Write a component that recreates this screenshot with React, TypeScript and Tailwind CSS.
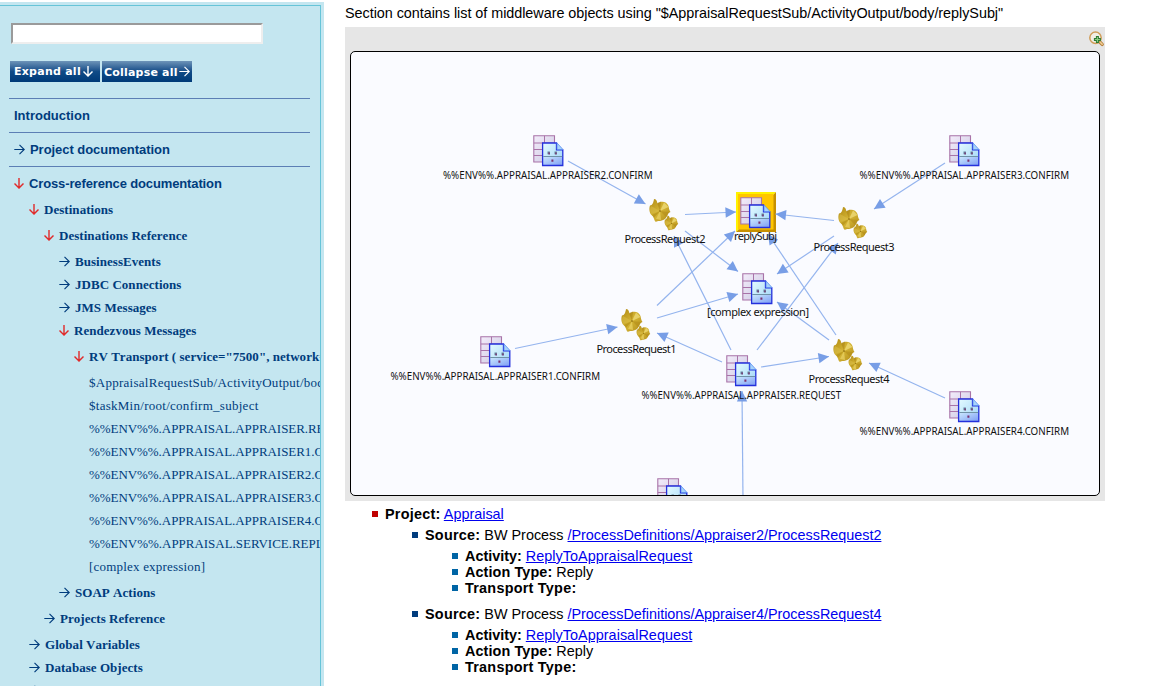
import React from "react";

const RightArrow = ({ className = "" }: { className?: string }) => (
  <svg className={`shrink-0 ${className}`} width="11" height="11" viewBox="0 0 11 11" fill="none" stroke="currentColor" strokeWidth="1.15">
    <path d="M0.3 5.5H10M5.5 0.8L10.2 5.5L5.5 10.2" />
  </svg>
);

const DownArrow = ({ className = "" }: { className?: string }) => (
  <svg className={`shrink-0 ${className}`} width="10" height="11" viewBox="0 0 10 11" fill="none" stroke="currentColor" strokeWidth="1.4">
    <path d="M5 0V10M0.5 5.4L5 10L9.5 5.4" />
  </svg>
);

type Row = { label: string; pad: string; arrow?: "right" | "down"; gap?: boolean };

const rows: Row[] = [
  { label: "Destinations", pad: "pl-[29px]", arrow: "down" },
  { label: "Destinations Reference", pad: "pl-[44px]", arrow: "down", gap: true },
  { label: "BusinessEvents", pad: "pl-[59px]", arrow: "right", gap: true },
  { label: "JDBC Connections", pad: "pl-[59px]", arrow: "right" },
  { label: "JMS Messages", pad: "pl-[59px]", arrow: "right" },
  { label: "Rendezvous Messages", pad: "pl-[59px]", arrow: "down" },
  { label: 'RV Transport ( service="7500", network="" )', pad: "pl-[74px]", arrow: "down", gap: true },
  { label: "$AppraisalRequestSub/ActivityOutput/body/replySubj", pad: "pl-[89px] tracking-[0.27px]", gap: true },
  { label: "$taskMin/root/confirm_subject", pad: "pl-[89px] tracking-[0.27px]" },
  { label: "%%ENV%%.APPRAISAL.APPRAISER.REQUEST", pad: "pl-[89px] tracking-[-0.06px]" },
  { label: "%%ENV%%.APPRAISAL.APPRAISER1.CONFIRM", pad: "pl-[89px] tracking-[-0.06px]" },
  { label: "%%ENV%%.APPRAISAL.APPRAISER2.CONFIRM", pad: "pl-[89px] tracking-[-0.06px]" },
  { label: "%%ENV%%.APPRAISAL.APPRAISER3.CONFIRM", pad: "pl-[89px] tracking-[-0.06px]" },
  { label: "%%ENV%%.APPRAISAL.APPRAISER4.CONFIRM", pad: "pl-[89px] tracking-[-0.06px]" },
  { label: "%%ENV%%.APPRAISAL.SERVICE.REPLY", pad: "pl-[89px] tracking-[-0.03px]" },
  { label: "[complex expression]", pad: "pl-[89px] tracking-[0.2px]" },
  { label: "SOAP Actions", pad: "pl-[59px]", arrow: "right", gap: true },
  { label: "Projects Reference", pad: "pl-[44px]", arrow: "right", gap: true },
  { label: "Global Variables", pad: "pl-[29px]", arrow: "right", gap: true },
  { label: "Database Objects", pad: "pl-[29px]", arrow: "right" },
  { label: "Files", pad: "pl-[29px]", arrow: "right" },
];

function TreeRow({ row }: { row: Row }) {
  return (
    <li className={`flex h-[23px] items-center whitespace-nowrap ${row.pad} ${row.gap ? "mt-[3px]" : ""} ${row.arrow ? "font-bold tracking-[0.04px] [font-kerning:none]" : ""}`}>
      {row.arrow === "right" && <RightArrow className="mr-[5px]" />}
      {row.arrow === "down" && <DownArrow className="mr-[5px] text-[#e02a2a]" />}
      <span>{row.label}</span>
    </li>
  );
}

function Sidebar() {
  return (
    <aside className="mt-[2px] h-[684px] w-[324px] shrink-0 overflow-hidden bg-[#c4e6f0] pt-[3px] text-[#003c7d]">
      <div className="h-[690px] w-[321px] overflow-hidden border-t border-r border-[#66c4d8] pt-[17px]">
        <input className="ml-[11px] block h-[21px] w-[252px] border-2 border-t-[#9a9a9a] border-r-[#eeeeee] border-b-[#eeeeee] border-l-[#9a9a9a] bg-white" aria-label="Search" />
        <div className="mt-[17px] ml-[10px] flex gap-[2px] font-['DejaVu_Sans',sans-serif] text-[11px] leading-[20px] font-bold text-white">
          <button className="flex h-[21px] w-[90px] items-center bg-linear-to-b from-[#6d94b8] via-[#104b87] to-[#003a78] pl-[4px] text-left whitespace-nowrap">
            <span className="w-[69px] shrink-0 tracking-[0.25px]">Expand all</span>
            <DownArrow />
          </button>
          <button className="flex h-[21px] w-[90px] items-center bg-linear-to-b from-[#6d94b8] via-[#104b87] to-[#003a78] pl-[2px] text-left whitespace-nowrap">
            <span className="w-[75px] shrink-0 pt-[2px] tracking-[0.2px]">Collapse all</span>
            <RightArrow />
          </button>
        </div>
        <nav className="mt-[16px] ml-[9px] w-[301px] font-['Liberation_Sans',sans-serif] text-[13px] font-bold">
          <div className="flex h-[34px] items-center border-t border-[#5c7fb5] pl-[5px]">Introduction</div>
          <div className="flex h-[34px] items-center border-t border-[#5c7fb5] pl-[5px] tracking-[-0.05px]">
            <RightArrow className="mr-[5px]" />
            Project documentation
          </div>
          <div className="flex h-[32px] items-center border-t border-[#5c7fb5] pt-[2px] pl-[5px] tracking-[-0.13px]">
            <DownArrow className="mr-[5px] text-[#e02a2a]" />
            Cross-reference documentation
          </div>
        </nav>
        <ul className="font-['Liberation_Serif',serif] text-[13px] leading-[15px]">
          {rows.map((row) => (
            <TreeRow key={row.label} row={row} />
          ))}
        </ul>
      </div>
    </aside>
  );
}

const edges: [number, number, number, number][] = [
  [568, 161, 645.5, 204],
  [685, 214.5, 736, 212],
  [834, 220.5, 775.5, 214],
  [685, 231, 738, 271.5],
  [834, 236, 777, 274],
  [657, 305.5, 735, 231],
  [657, 318, 738, 294],
  [731, 350, 674, 236],
  [757, 350, 838, 243],
  [836, 335, 768, 234],
  [829, 340, 777, 302],
  [945, 163, 874, 209],
  [515, 348.5, 617.5, 327],
  [722, 362, 657, 333],
  [761, 367, 829, 356.5],
  [945, 398, 869, 363],
  [743, 500, 742, 391],
];

const objects: [number, number][] = [
  [533, 135], [949, 135], [480, 336], [726, 355], [742, 273], [657, 478], [949, 391], [740, 197],
];

const processes: [number, number][] = [[649, 199], [838, 207], [621, 309], [833, 339]];

const envLabels: [number, number, string, number][] = [
  [443, 178.5, "%%ENV%%.APPRAISAL.APPRAISER2.CONFIRM", 209.5],
  [859.5, 178.5, "%%ENV%%.APPRAISAL.APPRAISER3.CONFIRM", 209.5],
  [390.5, 379.7, "%%ENV%%.APPRAISAL.APPRAISER1.CONFIRM", 209.5],
  [641.5, 398.5, "%%ENV%%.APPRAISAL.APPRAISER.REQUEST", 199.5],
  [859.5, 434.5, "%%ENV%%.APPRAISAL.APPRAISER4.CONFIRM", 209.5],
];

const labels: [number, number, string, number][] = [
  [624.5, 243, "ProcessRequest2", 81],
  [813.5, 251, "ProcessRequest3", 81],
  [596.5, 352.5, "ProcessRequest1", 80],
  [808.5, 382.5, "ProcessRequest4", 81],
  [734, 240, "replySubj", 43],
  [707, 316, "[complex expression]", 102],
];

function ObjectIcon({ x, y }: { x: number; y: number }) {
  return (
    <g transform={`translate(${x} ${y})`}>
      <path d="M0.8 0.8H21.5V27H0.8Z" fill="url(#grid)" stroke="#a873a8" strokeWidth="1.1" />
      <path d="M11.5 0.8V27M0.8 8H21.5M0.8 14.5H21.5M0.8 20.5H21.5" stroke="#a873a8" strokeWidth="1" fill="none" />
      <path d="M9.6 8H24L29.8 14.5V30.5H9.6Z" fill="url(#doc)" />
      <path d="M9.6 21.5H29.8V30.5H9.6Z" fill="url(#docBase)" />
      <path d="M9.6 8H23.5V14.8H29.8V30.5H9.6Z" fill="none" stroke="#2430dc" strokeWidth="1.3" />
      <path d="M24 8L30 14.5H24Z" fill="#a8d4fa" stroke="#5a8cf0" strokeWidth="0.8" />
      <path d="M10.2 21.5H29.2" stroke="#6f93a8" strokeWidth="1" />
      <path d="M14.5 16.5h2.4v2.8h-2.4zM21.5 16.5h2.4v2.8h-2.4z" fill="#62829c" />
      <path d="M15.5 17.5h1.3v2h-1.3zM22.3 17.5h1.3v2h-1.3zM18.4 24.5h2v2.3h-2z" fill="#7a3070" />
    </g>
  );
}

const gearPath = "M5 0C8 0.3 8 3 8.5 4.5C12 1.5 18 2.5 19.5 7C20 9 20 11 21.5 13C18.5 14 19 17 16 20C13 22.5 8 21.5 7 23C4.5 21 5.5 18.5 3 16.5C0 14 0 9 1 6.5C3.5 6.5 4.5 3 5 0Z";

function Gear() {
  return (
    <>
      <path d={gearPath} fill="url(#gold)" />
      <path d="M11 12L2 7Q0 11 2 15Z" fill="#dcc04c" opacity="0.5" />
      <path d="M11 12L15 3.5L19.5 8Z" fill="#f5e487" opacity="0.65" />
      <path d="M11 12L8 4L12 2.5Z" fill="#a17b10" opacity="0.45" />
      <path d="M11 12L20 13L17 18Z" fill="#ac8414" opacity="0.45" />
      <path d="M11 12L12 21L7 20Z" fill="#f0db72" opacity="0.6" />
      <path d="M11 12L5 19L3 16Z" fill="#9d7808" opacity="0.4" />
      <circle cx="11" cy="12" r="0.8" fill="#806008" />
    </>
  );
}

function ProcessIcon({ x, y }: { x: number; y: number }) {
  return (
    <g transform={`translate(${x} ${y})`}>
      <Gear />
      <g transform="translate(15.3 16.5) scale(0.65)">
        <Gear />
      </g>
    </g>
  );
}

function Edge({ e }: { e: [number, number, number, number] }) {
  const [x1, y1, x2, y2] = e;
  const angle = (Math.atan2(y2 - y1, x2 - x1) * 180) / Math.PI;
  return (
    <g>
      <line x1={x1} y1={y1} x2={x2} y2={y2} stroke="#94b4ee" strokeWidth="1.2" />
      <path d="M0 0L-10.5 -5.2V5.2Z" fill="#789ee6" transform={`translate(${x2} ${y2}) rotate(${angle})`} />
    </g>
  );
}

function Diagram() {
  return (
    <svg className="block" width="748" height="443" viewBox="351 52 748 443">
      <defs>
        <linearGradient id="grid" x1="0" y1="0" x2="1" y2="1">
          <stop offset="0" stopColor="#f3ecfa" />
          <stop offset="1" stopColor="#ccc8e2" />
        </linearGradient>
        <linearGradient id="doc" x1="0" y1="0" x2="1" y2="1">
          <stop offset="0" stopColor="#e4fbff" />
          <stop offset="1" stopColor="#9cd2f6" />
        </linearGradient>
        <linearGradient id="docBase" x1="0" y1="0" x2="1" y2="1">
          <stop offset="0" stopColor="#cdeafe" />
          <stop offset="1" stopColor="#7c9cf4" />
        </linearGradient>
        <linearGradient id="gold" x1="0" y1="0" x2="1" y2="1">
          <stop offset="0" stopColor="#b08a14" />
          <stop offset="0.5" stopColor="#d4b434" />
          <stop offset="1" stopColor="#b08a18" />
        </linearGradient>
      </defs>
      <path d="M736 192H776L773 195H739V229L736 232Z" fill="#fff200" />
      <path d="M776 192V232H736L739 229H773V195Z" fill="#c79000" />
      <rect x="738" y="194" width="35.5" height="35.5" fill="#ffc600" />
      {edges.map((e, i) => (
        <Edge key={i} e={e} />
      ))}
      {objects.map(([x, y]) => (
        <ObjectIcon key={`${x}-${y}`} x={x} y={y} />
      ))}
      {processes.map(([x, y]) => (
        <ProcessIcon key={`${x}-${y}`} x={x} y={y} />
      ))}
      <g className="font-['Noto_Sans',sans-serif] text-[11px]" fill="#111">
        {envLabels.map(([x, y, t, w]) => (
          <text key={t} x={x} y={y} textLength={w} lengthAdjust="spacingAndGlyphs" className="text-[11.3px]">
            {t}
          </text>
        ))}
        {labels.map(([x, y, t, w]) => (
          <text key={t} x={x} y={y} textLength={w}>
            {t}
          </text>
        ))}
      </g>
    </svg>
  );
}

function ZoomIcon() {
  return (
    <svg width="16" height="16" viewBox="0 0 16 16" fill="none">
      <path d="M10.8 11L13.2 13.4" stroke="#b8803c" strokeWidth="3.4" strokeLinecap="round" />
      <path d="M11 11L13.2 13.2" stroke="#efcf96" strokeWidth="1.6" strokeLinecap="round" />
      <circle cx="6.5" cy="6.7" r="5.7" fill="#f2eee4" stroke="#cf9c58" strokeWidth="1.5" />
      <path d="M8.4 5V12M4.9 8.5H11.9" stroke="#2d7a32" strokeWidth="3" />
      <path d="M8.4 6V11M5.9 8.5H10.9" stroke="#8ccc80" strokeWidth="1.1" />
    </svg>
  );
}

const link = "text-[#0000ee] underline";
const strong = "font-bold tracking-[0.25px]";

function Source({ path }: { path: string }) {
  return (
    <li>
      <div className="flex h-[16px] items-center">
        <span className="mr-[7px] size-[6px] bg-[#003c7d]" />
        <p><b className={strong}>Source:</b> BW Process <a className={`${link} tracking-[-0.01px]`}>{path}</a></p>
      </div>
      <ul className="mt-[5px] ml-[40px]">
        <li className="flex h-[16px] items-center">
          <span className="mr-[7px] size-[6px] bg-[#0065a5]" />
          <p><b className="font-bold">Activity:</b> <a className={`${link} tracking-[0.04px]`}>ReplyToAppraisalRequest</a></p>
        </li>
        <li className="flex h-[16px] items-center">
          <span className="mr-[7px] size-[6px] bg-[#0065a5]" />
          <p><b className="font-bold tracking-[0.1px]">Action Type:</b> Reply</p>
        </li>
        <li className="flex h-[16px] items-center">
          <span className="mr-[7px] size-[6px] bg-[#0065a5]" />
          <b className={strong}>Transport Type:</b>
        </li>
      </ul>
    </li>
  );
}

export default function App() {
  return (
    <div className="flex h-[686px] w-[1173px] overflow-hidden bg-white">
      <Sidebar />
      <main className="ml-[21px] pt-[5px] font-['Liberation_Sans',sans-serif] text-[14.4px] leading-[16px] whitespace-nowrap text-black">
        <p className="h-[22px] tracking-[-0.04px]">Section contains list of middleware objects using "$AppraisalRequestSub/ActivityOutput/body/replySubj"</p>
        <section className="h-[474px] w-[760px] bg-[#e6e6e6] px-[5px]">
          <div className="-mr-[5px] flex h-[24px] items-center justify-end">
            <ZoomIcon />
          </div>
          <div className="h-[445px] w-[750px] overflow-hidden rounded-[5px] border border-black bg-[#fafbff]">
            <Diagram />
          </div>
        </section>
        <div className="mt-[5px] ml-[27px]">
          <div className="flex h-[16px] items-center">
            <span className="mr-[7px] size-[6px] bg-[#c00000]" />
            <p><b className={strong}>Project:</b> <a className={link}>Appraisal</a></p>
          </div>
          <ul className="mt-[5px] ml-[40px] flex flex-col gap-[10px]">
            <Source path="/ProcessDefinitions/Appraiser2/ProcessRequest2" />
            <Source path="/ProcessDefinitions/Appraiser4/ProcessRequest4" />
          </ul>
        </div>
      </main>
    </div>
  );
}
